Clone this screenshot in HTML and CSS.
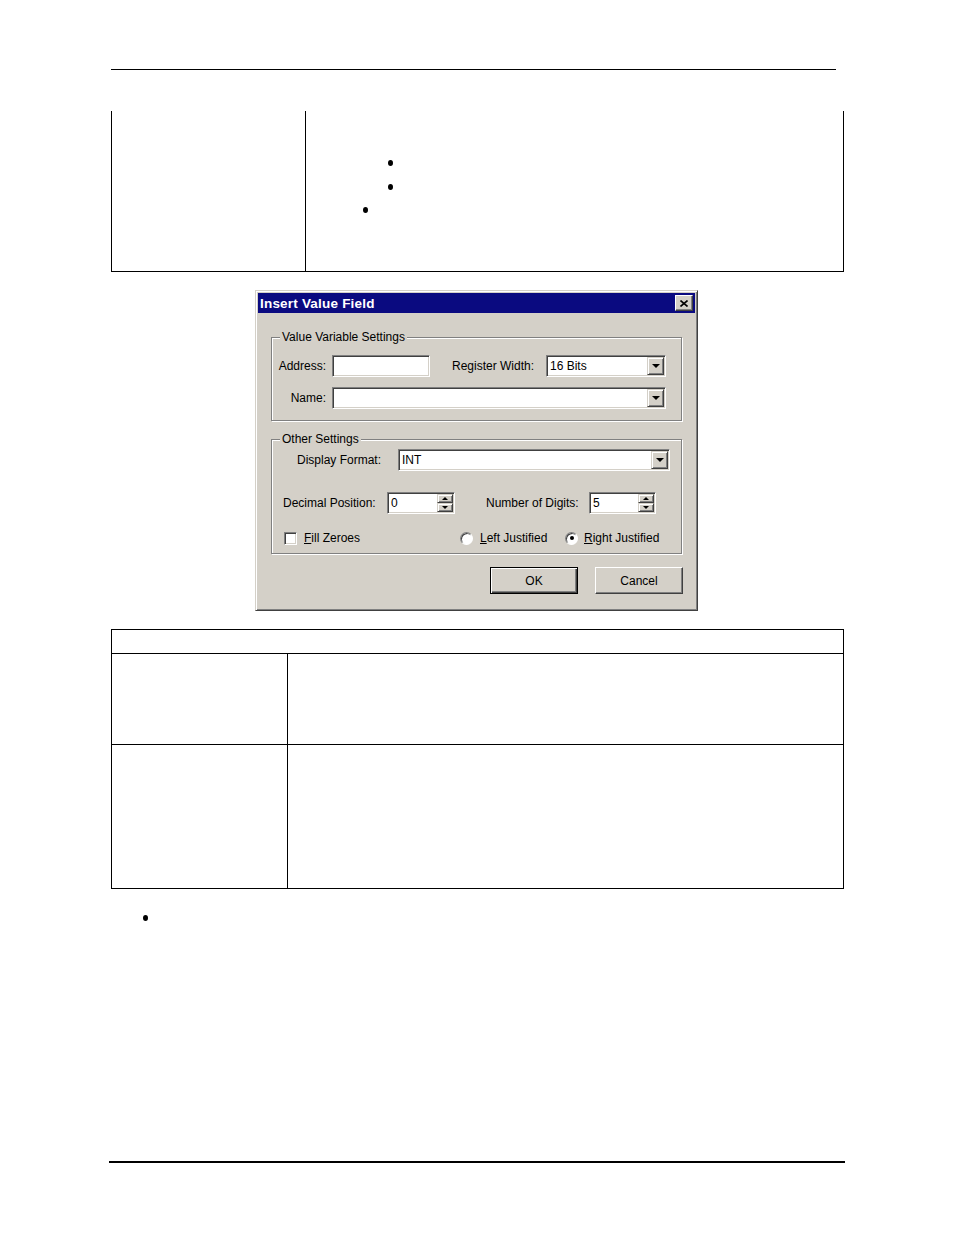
FILE: index.html
```html
<!DOCTYPE html>
<html>
<head>
<meta charset="utf-8">
<link rel="stylesheet" href="styles.css">
</head>
<body>
<div class="page">
  <div class="rule rule-top"></div>

  <div class="t1">
    <div class="t1-left"></div>
    <div class="t1-right">
      <div class="bl bl-in"><span class="dot"></span></div>
      <div class="bl bl-in"><span class="dot"></span></div>
      <div class="bl bl-out"><span class="dot"></span></div>
    </div>
  </div>

  <div class="dialog">
    <div class="titlebar">
      <span class="title">Insert Value Field</span>
      <span class="close"><svg width="8" height="7" viewBox="0 0 8 7"><path d="M0.5 0.5 L7.5 6.5 M7.5 0.5 L0.5 6.5" stroke="#000" stroke-width="1.6" fill="none"/></svg></span>
    </div>
    <div class="dlg-body">
      <div class="group g1">
        <span class="legend">Value Variable Settings</span>
        <div class="row r1">
          <span class="lbl lbl-addr">Address:</span>
          <div class="field f-addr"></div>
          <span class="lbl lbl-reg">Register Width:</span>
          <div class="field f-reg"><span class="val">16 Bits</span><span class="ddbtn"><i class="tri"></i></span></div>
        </div>
        <div class="row r2">
          <span class="lbl lbl-addr">Name:</span>
          <div class="field f-name"><span class="val"></span><span class="ddbtn"><i class="tri"></i></span></div>
        </div>
      </div>

      <div class="group g2">
        <span class="legend">Other Settings</span>
        <div class="row r3">
          <span class="lbl lbl-disp">Display Format:</span>
          <div class="field f-disp"><span class="val">INT</span><span class="ddbtn"><i class="tri"></i></span></div>
        </div>
        <div class="row r4">
          <span class="lbl lbl-dec">Decimal Position:</span>
          <div class="field f-spin1"><span class="val">0</span><span class="spin"><span class="sbtn"><i class="tri-up"></i></span><span class="sbtn"><i class="tri-dn"></i></span></span></div>
          <span class="lbl lbl-num">Number of Digits:</span>
          <div class="field f-spin2"><span class="val">5</span><span class="spin"><span class="sbtn"><i class="tri-up"></i></span><span class="sbtn"><i class="tri-dn"></i></span></span></div>
        </div>
        <div class="row r5">
          <span class="opt opt-fill"><span class="chk"></span><span><u>F</u>ill Zeroes</span></span>
          <span class="opt opt-left"><span class="radio"></span><span><u>L</u>eft Justified</span></span>
          <span class="opt opt-right"><span class="radio on"></span><span><u>R</u>ight Justified</span></span>
        </div>
      </div>

      <div class="buttons">
        <span class="btn btn-default">OK</span>
        <span class="btn">Cancel</span>
      </div>
    </div>
  </div>

  <div class="t2">
    <div class="t2-head"></div>
    <div class="t2-row t2-row1"><div class="t2-l"></div><div class="t2-r"></div></div>
    <div class="t2-row t2-row2"><div class="t2-l"></div><div class="t2-r"></div></div>
  </div>

  <div class="bl-bottom"><span class="dot"></span></div>

  <div class="rule rule-bottom"></div>
</div>
</body>
</html>
```

FILE: styles.css
```css
html, body {
  margin: 0;
  padding: 0;
  background: #ffffff;
}
.page {
  width: 954px;
  height: 1235px;
  display: flex;
  flex-direction: column;
  font-family: "Liberation Sans", Arial, sans-serif;
  overflow: hidden;
}
.rule {
  background: #000;
}
.rule-top {
  margin-top: 69px;
  margin-left: 111px;
  width: 725px;
  height: 1px;
}
.rule-bottom {
  margin-top: 240px;
  margin-left: 109px;
  width: 736px;
  height: 2px;
}

/* table 1 */
.t1 {
  margin-top: 41px;
  margin-left: 111px;
  width: 733px;
  height: 161px;
  box-sizing: border-box;
  border-left: 1px solid #000;
  border-right: 1px solid #000;
  border-bottom: 1px solid #000;
  display: flex;
}
.t1-left {
  width: 193px;
  flex: none;
  border-right: 1px solid #000;
}
.t1-right {
  flex: 1;
  padding-top: 49px;
}
.bl {
  height: 23.5px;
}
.bl-in {
  padding-left: 82px;
}
.bl-out {
  padding-left: 57px;
}
.dot {
  display: block;
  width: 5px;
  height: 6px;
  border-radius: 50%;
  background: #000;
}

/* dialog */
.dialog {
  margin-top: 18px;
  margin-left: 255px;
  width: 443px;
  height: 321px;
  box-sizing: border-box;
  background: #d4d0c8;
  border: 1px solid;
  border-color: #d4d0c8 #404040 #404040 #d4d0c8;
  box-shadow: inset 1px 1px 0 #ffffff, inset -1px -1px 0 #808080;
  padding: 2px;
  font-size: 12px;
  color: #000;
}
.titlebar {
  height: 20px;
  background: #0a0a80;
  display: flex;
  align-items: center;
  justify-content: space-between;
  padding: 0 2px 0 2px;
}
.title {
  color: #ffffff;
  font-weight: bold;
  font-size: 13.5px;
  letter-spacing: 0.2px;
}
.close {
  width: 18px;
  height: 16px;
  box-sizing: border-box;
  background: #d4d0c8;
  border: 1px solid;
  border-color: #ffffff #404040 #404040 #ffffff;
  box-shadow: inset -1px -1px 0 #808080;
  display: flex;
  align-items: center;
  justify-content: center;
}
.dlg-body {
  padding: 0 13px 0 13px;
}
.group {
  width: 411px;
  box-sizing: border-box;
  border: 1px solid #808080;
  box-shadow: inset 1px 1px 0 #ffffff, 1px 1px 0 #ffffff;
}
.g1 {
  margin-top: 24px;
  padding-bottom: 11px;
}
.g2 {
  margin-top: 18px;
  padding-bottom: 7px;
}
.legend {
  display: block;
  width: max-content;
  height: 14px;
  line-height: 14px;
  margin: -8px 0 0 8px;
  padding: 0 2px;
  background: #d4d0c8;
}
.row {
  display: flex;
  align-items: center;
  height: 22px;
}
.r1 { margin-top: 11px; }
.r2 { margin-top: 10px; }
.r3 { margin-top: 3px; }
.r4 { margin-top: 21px; }
.r5 { margin-top: 16px; height: 16px; padding-left: 12px; }

.lbl {
  flex: none;
  white-space: nowrap;
}
.lbl-addr {
  width: 54px;
  text-align: right;
  margin-right: 6px;
}
.lbl-reg {
  width: 94px;
  margin-left: 22px;
}
.lbl-disp {
  width: 101px;
  margin-left: 25px;
}
.lbl-dec {
  width: 104px;
  margin-left: 11px;
}
.lbl-num {
  width: 103px;
  margin-left: 31px;
}

.field {
  flex: none;
  height: 22px;
  box-sizing: border-box;
  background: #ffffff;
  border: 1px solid;
  border-color: #808080 #ffffff #ffffff #808080;
  box-shadow: inset 1px 1px 0 #404040, inset -1px -1px 0 #d4d0c8;
  padding: 1px;
  display: flex;
  align-items: center;
}
.f-addr { width: 98px; }
.f-reg { width: 120px; }
.f-name { width: 334px; }
.f-disp { width: 272px; }
.f-spin1 { width: 68px; }
.f-spin2 { width: 67px; }
.val {
  flex: 1;
  padding-left: 2px;
  white-space: nowrap;
}
.ddbtn {
  width: 17px;
  height: 18px;
  box-sizing: border-box;
  background: #d4d0c8;
  border: 1px solid;
  border-color: #d4d0c8 #404040 #404040 #d4d0c8;
  box-shadow: inset 1px 1px 0 #ffffff, inset -1px -1px 0 #808080;
  display: flex;
  align-items: center;
  justify-content: center;
}
.tri {
  display: block;
  width: 0;
  height: 0;
  border-left: 4px solid transparent;
  border-right: 4px solid transparent;
  border-top: 4px solid #000;
}
.spin {
  width: 16px;
  height: 18px;
  display: flex;
  flex-direction: column;
}
.sbtn {
  height: 9px;
  box-sizing: border-box;
  background: #d4d0c8;
  border: 1px solid;
  border-color: #d4d0c8 #404040 #404040 #d4d0c8;
  box-shadow: inset 1px 1px 0 #ffffff, inset -1px -1px 0 #808080;
  display: flex;
  align-items: center;
  justify-content: center;
}
.tri-up {
  display: block;
  width: 0;
  height: 0;
  border-left: 3px solid transparent;
  border-right: 3px solid transparent;
  border-bottom: 3px solid #000;
}
.tri-dn {
  display: block;
  width: 0;
  height: 0;
  border-left: 3px solid transparent;
  border-right: 3px solid transparent;
  border-top: 3px solid #000;
}

.opt {
  display: flex;
  align-items: center;
  flex: none;
  white-space: nowrap;
}
.opt-fill { width: 176px; }
.opt-left { width: 105px; }
.chk {
  width: 13px;
  height: 13px;
  box-sizing: border-box;
  background: #ffffff;
  border: 1px solid;
  border-color: #808080 #ffffff #ffffff #808080;
  box-shadow: inset 1px 1px 0 #404040, inset -1px -1px 0 #d4d0c8;
  margin-right: 7px;
}
.radio {
  width: 13px;
  height: 13px;
  box-sizing: border-box;
  border-radius: 50%;
  background: #ffffff;
  border: 1px solid;
  border-color: #808080 #ffffff #ffffff #808080;
  box-shadow: inset 1px 1px 0 #404040;
  margin-right: 7px;
  display: flex;
  align-items: center;
  justify-content: center;
}
.opt-right .radio {
  margin-right: 6px;
}
.radio.on::after {
  content: "";
  display: block;
  width: 4px;
  height: 4px;
  border-radius: 50%;
  background: #000;
}

.buttons {
  margin-top: 13px;
  display: flex;
  justify-content: flex-end;
  gap: 17px;
  padding-right: 12px;
  margin-right: -13px;
}
.btn {
  width: 88px;
  height: 27px;
  box-sizing: border-box;
  display: flex;
  align-items: center;
  justify-content: center;
  background: #d4d0c8;
  border: 1px solid;
  border-color: #ffffff #404040 #404040 #ffffff;
  box-shadow: inset -1px -1px 0 #808080;
}
.btn-default {
  border: 1px solid #000;
  box-shadow: inset 1px 1px 0 #ffffff, inset -1px -1px 0 #404040, inset -2px -2px 0 #808080;
}

/* table 2 */
.t2 {
  margin-top: 18px;
  margin-left: 111px;
  width: 733px;
  box-sizing: border-box;
  border: 1px solid #000;
}
.t2-head {
  height: 23px;
  border-bottom: 1px solid #000;
}
.t2-row {
  display: flex;
}
.t2-row1 {
  height: 90px;
  border-bottom: 1px solid #000;
}
.t2-row2 {
  height: 143px;
}
.t2-l {
  width: 175px;
  flex: none;
  border-right: 1px solid #000;
}
.t2-r {
  flex: 1;
}

.bl-bottom {
  margin-top: 26px;
  padding-left: 143px;
  height: 6px;
}
```
